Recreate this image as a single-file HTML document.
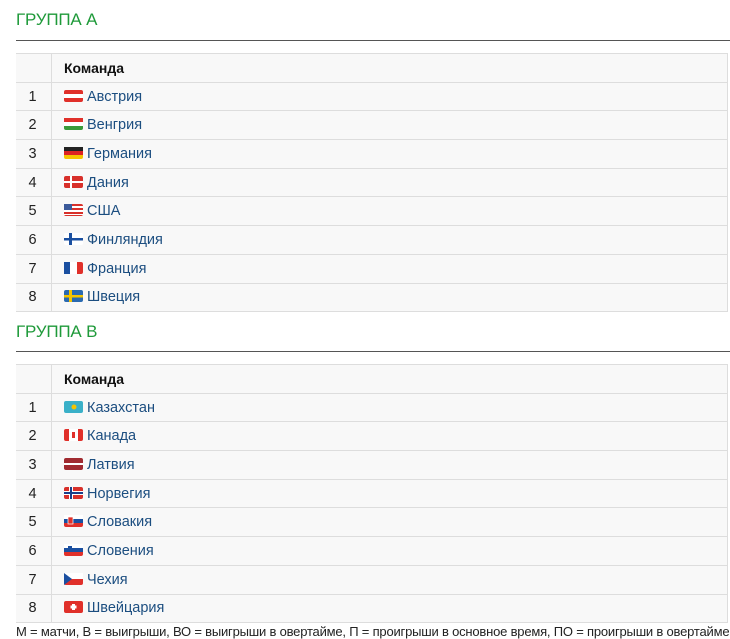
<!DOCTYPE html>
<html><head><meta charset="utf-8"><style>
body{margin:0;width:730px;height:633px;overflow:hidden;background:#fff;font-family:"Liberation Sans",Arial,sans-serif;position:relative}
.t{position:absolute;left:16px;font-size:17px;color:#1f9a3a;letter-spacing:-0.2px}
.ln{position:absolute;left:16px;width:714px;height:1px;background:#555}
.tb{position:absolute;left:16px;width:711px;border-right:1px solid #ddd;border-top:1px solid #ddd;background:#f8f8f8}
.r{height:27.7px;border-bottom:1px solid #ddd;display:flex;align-items:center;font-size:14.5px;line-height:16px}
.n{width:36px;height:100%;border-right:1px solid #ddd;display:flex;align-items:center;justify-content:center;color:#222;box-sizing:border-box;padding-right:2px}
.c{padding-left:12px;display:flex;align-items:center;color:#1c4e80}
.h .c{color:#111;font-weight:bold;font-size:14px}
svg{display:block;margin-right:4px;margin-top:-2px;width:19px;height:12px;flex:none}
.f{position:absolute;left:16px;top:624px;font-size:13px;color:#222;white-space:nowrap;letter-spacing:-0.2px}
</style></head><body>
<div class="t" style="top:10px">ГРУППА А</div>
<div class="ln" style="top:40px"></div>
<div class="tb" style="top:53px">
<div class="r h"><div class="n"></div><div class="c"><span>Команда</span></div></div>
<div class="r"><div class="n">1</div><div class="c"><svg viewBox="0 0 19 12"><rect width="19" height="12" rx="2" fill="#e0302a"/><rect y="4" width="19" height="4" fill="#fff"/></svg><span>Австрия</span></div></div>
<div class="r"><div class="n">2</div><div class="c"><svg viewBox="0 0 19 12"><rect width="19" height="12" rx="2" fill="#3a9a3a"/><rect width="19" height="4" fill="#e0302a"/><rect y="4" width="19" height="4" fill="#fff"/></svg><span>Венгрия</span></div></div>
<div class="r"><div class="n">3</div><div class="c"><svg viewBox="0 0 19 12"><rect width="19" height="12" rx="2" fill="#f5c400"/><rect width="19" height="4" fill="#222"/><rect y="4" width="19" height="4" fill="#d22"/></svg><span>Германия</span></div></div>
<div class="r"><div class="n">4</div><div class="c"><svg viewBox="0 0 19 12"><rect width="19" height="12" rx="2" fill="#d8302a"/><rect x="6" width="2" height="12" fill="#fff"/><rect y="5" width="19" height="2" fill="#fff"/></svg><span>Дания</span></div></div>
<div class="r"><div class="n">5</div><div class="c"><svg viewBox="0 0 19 12"><rect width="19" height="12" rx="2" fill="#d8302a"/><rect y="2" width="19" height="2" fill="#fff"/><rect y="6" width="19" height="2" fill="#fff"/><rect y="10" width="19" height="1" fill="#fff"/><rect width="8" height="6" fill="#3b5a9a"/></svg><span>США</span></div></div>
<div class="r"><div class="n">6</div><div class="c"><svg viewBox="0 0 19 12"><rect width="19" height="12" rx="2" fill="#fff"/><rect x="5" width="3" height="12" fill="#1a4fa0"/><rect y="5" width="19" height="2.5" fill="#1a4fa0"/></svg><span>Финляндия</span></div></div>
<div class="r"><div class="n">7</div><div class="c"><svg viewBox="0 0 19 12"><rect width="19" height="12" rx="2" fill="#e0302a"/><rect width="6" height="12" fill="#1a4fa0"/><rect x="6" width="7" height="12" fill="#fff"/></svg><span>Франция</span></div></div>
<div class="r"><div class="n">8</div><div class="c"><svg viewBox="0 0 19 12"><rect width="19" height="12" rx="2" fill="#2a6ab0"/><rect x="5" width="3" height="12" fill="#f5c400"/><rect y="5" width="19" height="2.5" fill="#f5c400"/></svg><span>Швеция</span></div></div>
</div>
<div class="t" style="top:322px">ГРУППА В</div>
<div class="ln" style="top:351px"></div>
<div class="tb" style="top:364px">
<div class="r h"><div class="n"></div><div class="c"><span>Команда</span></div></div>
<div class="r"><div class="n">1</div><div class="c"><svg viewBox="0 0 19 12"><rect width="19" height="12" rx="2" fill="#3ab0c8"/><circle cx="10" cy="6" r="2.5" fill="#f5c400"/></svg><span>Казахстан</span></div></div>
<div class="r"><div class="n">2</div><div class="c"><svg viewBox="0 0 19 12"><rect width="19" height="12" rx="2" fill="#e0302a"/><rect x="5" width="9" height="12" fill="#fff"/><rect x="8" y="3" width="3" height="6" fill="#e0302a"/></svg><span>Канада</span></div></div>
<div class="r"><div class="n">3</div><div class="c"><svg viewBox="0 0 19 12"><rect width="19" height="12" rx="2" fill="#a02a30"/><rect y="5" width="19" height="2" fill="#fff"/></svg><span>Латвия</span></div></div>
<div class="r"><div class="n">4</div><div class="c"><svg viewBox="0 0 19 12"><rect width="19" height="12" rx="2" fill="#d8302a"/><rect x="5" width="4" height="12" fill="#fff"/><rect y="4" width="19" height="4" fill="#fff"/><rect x="6" width="2" height="12" fill="#1a3f8a"/><rect y="5" width="19" height="2" fill="#1a3f8a"/></svg><span>Норвегия</span></div></div>
<div class="r"><div class="n">5</div><div class="c"><svg viewBox="0 0 19 12"><rect width="19" height="12" rx="2" fill="#e0302a"/><rect width="19" height="4" fill="#fff"/><rect y="4" width="19" height="4" fill="#1a4fa0"/><rect x="4" y="2" width="5" height="7" fill="#e0302a" stroke="#fff" stroke-width=".7"/></svg><span>Словакия</span></div></div>
<div class="r"><div class="n">6</div><div class="c"><svg viewBox="0 0 19 12"><rect width="19" height="12" rx="2" fill="#e0302a"/><rect width="19" height="4" fill="#fff"/><rect y="4" width="19" height="4" fill="#1a4fa0"/><rect x="4" y="2" width="4" height="4" fill="#1a4fa0"/></svg><span>Словения</span></div></div>
<div class="r"><div class="n">7</div><div class="c"><svg viewBox="0 0 19 12"><rect width="19" height="12" rx="2" fill="#e0302a"/><rect width="19" height="6" fill="#fff"/><path d="M0 0L8 6L0 12Z" fill="#1a4fa0"/></svg><span>Чехия</span></div></div>
<div class="r"><div class="n">8</div><div class="c"><svg viewBox="0 0 19 12"><rect width="19" height="12" rx="2" fill="#e0302a"/><rect x="8" y="3" width="3" height="6" fill="#fff"/><rect x="6.5" y="4.5" width="6" height="3" fill="#fff"/></svg><span>Швейцария</span></div></div>
</div>
<div class="f">М = матчи, В = выигрыши, ВО = выигрыши в овертайме, П = проигрыши в основное время, ПО = проигрыши в овертайме</div>
</body></html>
